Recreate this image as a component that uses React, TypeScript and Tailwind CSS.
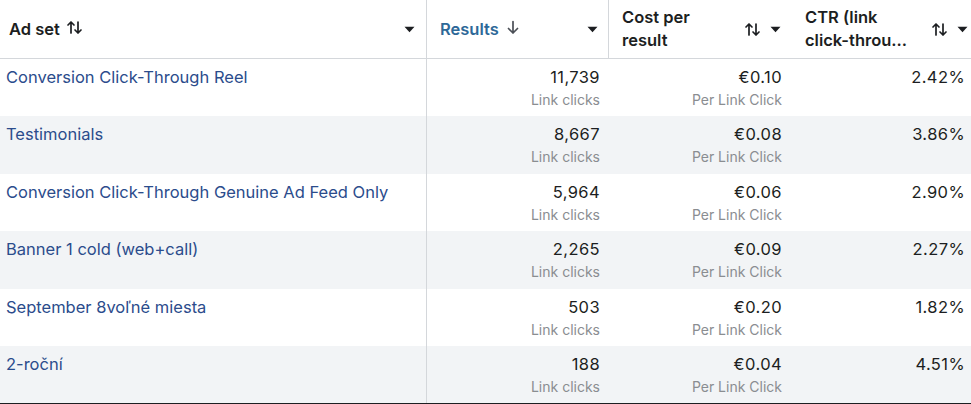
const rows = [
  { name: 'Conversion Click-Through Reel', results: '11,739', cost: '€0.10', ctr: '2.42%' },
  { name: 'Testimonials', results: '8,667', cost: '€0.08', ctr: '3.86%' },
  { name: 'Conversion Click-Through Genuine Ad Feed Only', results: '5,964', cost: '€0.06', ctr: '2.90%' },
  { name: 'Banner 1 cold (web+call)', results: '2,265', cost: '€0.09', ctr: '2.27%' },
  { name: 'September 8voľné miesta', results: '503', cost: '€0.20', ctr: '1.82%' },
  { name: '2-roční', results: '188', cost: '€0.04', ctr: '4.51%' },
]

function SortIcon() {
  return (
    <svg width="17" height="15" viewBox="0 0 17 15" fill="none" stroke="#1c1e21" strokeWidth="1.7" strokeLinecap="round" strokeLinejoin="round">
      <path d="M5 13V2M2 5l3-3 3 3" />
      <path d="M12 2v11M9 10l3 3 3-3" />
    </svg>
  )
}

function DownArrow() {
  return (
    <svg width="14" height="15" viewBox="0 0 14 15" fill="none" stroke="#4b4f56" strokeWidth="1.7" strokeLinecap="round" strokeLinejoin="round">
      <path d="M7 1.5V13M2.5 8.5L7 13l4.5-4.5" />
    </svg>
  )
}

function Caret() {
  return (
    <svg width="11" height="7" viewBox="0 0 11 7">
      <path d="M0.5 0.8h10L5.5 6.2z" fill="#1c1e21" />
    </svg>
  )
}

export default function App() {
  return (
    <div className="w-[971px] h-[404px] bg-white overflow-hidden text-[#1c1e21]" style={{ fontFamily: 'Inter, "Noto Sans", sans-serif' }}>
      <div className="grid grid-cols-[427px_182px_182px_180px] h-[59px] border-b border-[#d4d7db]">
        <div className="flex items-center pl-[9px] pr-[11px] border-r border-[#d4d7db]">
          <span className="text-[16.5px] font-semibold">Ad set</span>
          <span className="ml-[6px] mt-[-3px]"><SortIcon /></span>
          <span className="ml-auto"><Caret /></span>
        </div>
        <div className="flex items-center pl-[13px] pr-[10px] border-r border-[#d4d7db]">
          <span className="text-[16.5px] font-semibold text-[#2d6898]">Results</span>
          <span className="ml-[7px] mt-[-3px]"><DownArrow /></span>
          <span className="ml-auto"><Caret /></span>
        </div>
        <div className="flex items-center pl-[13px] pr-[10px]">
          <span className="text-[16.5px] font-semibold leading-[23px]">Cost per<br />result</span>
          <span className="ml-auto mr-[9px]"><SortIcon /></span>
          <Caret />
        </div>
        <div className="flex items-center pl-[14px] pr-[3px]">
          <span className="text-[16.5px] font-semibold leading-[23px] whitespace-nowrap">CTR (link<br />click-throu...</span>
          <span className="ml-auto mr-[9px]"><SortIcon /></span>
          <Caret />
        </div>
      </div>
      {rows.map((r, i) => (
        <div key={r.name} className={`grid grid-cols-[427px_182px_182px_180px] h-[57.4px] ${i % 2 === 1 ? 'bg-[#f2f4f6]' : 'bg-white'}`}>
          <div className="pl-[6px] pt-[6px] border-r border-[#d4d7db]">
            <span className="text-[16.5px] leading-[24px] text-[#2b4c8c]">{r.name}</span>
          </div>
          <div className="flex flex-col items-end pr-[9px] pt-[6px]">
            <span className="text-[16.5px] leading-[24px] tracking-[0.4px]">{r.results}</span>
            <span className="text-[14px] leading-[22px] text-[#8a8d91]">Link clicks</span>
          </div>
          <div className="flex flex-col items-end pr-[9px] pt-[6px]">
            <span className="text-[16.5px] leading-[24px] tracking-[0.4px]">{r.cost}</span>
            <span className="text-[14px] leading-[22px] text-[#8a8d91]">Per Link Click</span>
          </div>
          <div className="flex flex-col items-end pr-[6px] pt-[6px]">
            <span className="text-[16.5px] leading-[24px] tracking-[0.4px]">{r.ctr}</span>
          </div>
        </div>
      ))}
      <div className="h-[2px] bg-[#1c1e21]" />
    </div>
  )
}
